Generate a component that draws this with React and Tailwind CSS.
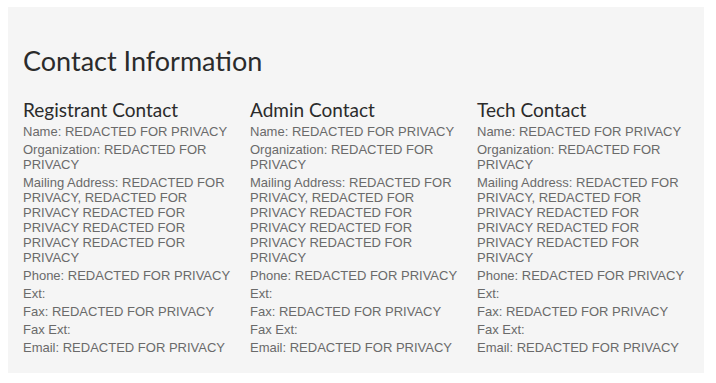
const REDACTED = 'REDACTED FOR PRIVACY'

const contacts = [
  { title: 'Registrant Contact' },
  { title: 'Admin Contact' },
  { title: 'Tech Contact' },
]

function ContactColumn({ title }) {
  const rows = [
    `Name: ${REDACTED}`,
    `Organization: ${REDACTED}`,
    `Mailing Address: ${REDACTED}, ${REDACTED} ${REDACTED} ${REDACTED} ${REDACTED}`,
    `Phone: ${REDACTED}`,
    'Ext:',
    `Fax: ${REDACTED}`,
    'Fax Ext:',
    `Email: ${REDACTED}`,
  ]

  return (
    <div className="pr-[15px]">
      <h3 className="font-['Lato',sans-serif] text-[19px] leading-[20px] text-[#2b2b2b] mb-[4px]">{title}</h3>
      <ul className="font-['Liberation_Sans',Arial,sans-serif] text-[13px] leading-[15px] text-[#6a6a6a]">
        {rows.map((row, i) => (
          <li key={i} className="mb-[3px]">{row}</li>
        ))}
      </ul>
    </div>
  )
}

export default function App() {
  return (
    <div className="bg-white w-[716px] h-[383px] pt-[7px] pl-[8px]">
      <section className="bg-[#f5f5f5] w-[696px] h-[366px] pl-[15px] pt-[39px]">
        <h2 className="font-['Lato',sans-serif] text-[27px] leading-[30px] text-[#2b2b2b] mb-[24px]">
          Contact Information
        </h2>
        <div className="grid grid-cols-3">
          {contacts.map(c => (
            <ContactColumn key={c.title} title={c.title} />
          ))}
        </div>
      </section>
    </div>
  )
}
